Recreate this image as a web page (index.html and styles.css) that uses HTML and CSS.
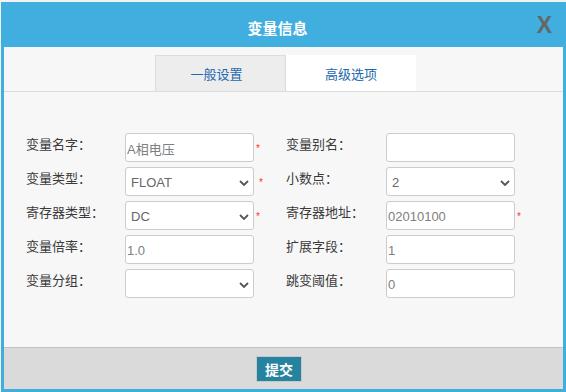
FILE: index.html
```html
<!DOCTYPE html>
<html lang="zh">
<head>
  <meta charset="UTF-8">
  <title>变量信息</title>
  <link rel="stylesheet" href="styles.css">
</head>
<body>
  <div class="dialog">
    <div class="dialog-head">
      <span class="dialog-title">变量信息</span>
      <span class="dialog-close">X</span>
    </div>

    <div class="dialog-body">
      <div class="tabs">
        <div class="tab tab-active">一般设置</div>
        <div class="tab">高级选项</div>
      </div>

      <div class="form">
        <label class="lbl">变量名字：</label>
        <input class="field" value="A相电压">
        <span class="req">*</span>
        <label class="lbl">变量别名：</label>
        <input class="field" value="">
        <span></span>

        <label class="lbl">变量类型：</label>
        <div class="field select"><span>FLOAT</span><svg width="10" height="6" viewBox="0 0 10 6"><path d="M1 1l4 4 4-4" fill="none" stroke="#555" stroke-width="1.8"/></svg></div>
        <span class="req req-sel">*</span>
        <label class="lbl">小数点：</label>
        <div class="field select"><span>2</span><svg width="10" height="6" viewBox="0 0 10 6"><path d="M1 1l4 4 4-4" fill="none" stroke="#555" stroke-width="1.8"/></svg></div>
        <span></span>

        <label class="lbl">寄存器类型：</label>
        <div class="field select"><span>DC</span><svg width="10" height="6" viewBox="0 0 10 6"><path d="M1 1l4 4 4-4" fill="none" stroke="#555" stroke-width="1.8"/></svg></div>
        <span class="req">*</span>
        <label class="lbl">寄存器地址：</label>
        <input class="field" value="02010100">
        <span class="req">*</span>

        <label class="lbl">变量倍率：</label>
        <input class="field" value="1.0">
        <span></span>
        <label class="lbl">扩展字段：</label>
        <input class="field" value="1">
        <span></span>

        <label class="lbl">变量分组：</label>
        <div class="field select"><span></span><svg width="10" height="6" viewBox="0 0 10 6"><path d="M1 1l4 4 4-4" fill="none" stroke="#555" stroke-width="1.8"/></svg></div>
        <span></span>
        <label class="lbl">跳变阈值：</label>
        <input class="field" value="0">
        <span></span>
      </div>
    </div>

    <div class="dialog-foot">
      <button class="btn-submit">提交</button>
    </div>
  </div>
</body>
</html>
```

FILE: styles.css
```css
body {
  margin: 0;
  background: #f2f2f2;
  font-family: "Liberation Sans", "Noto Sans CJK SC", sans-serif;
  overflow: hidden;
}

.dialog {
  margin: 2px 0 0 1px;
  width: 559px;
  height: 384px;
  border: 3px solid #41aee0;
  display: flex;
  flex-direction: column;
  background: #f7f7f7;
}

.dialog-head {
  height: 42px;
  background: #41aee0;
  display: flex;
  align-items: center;
  justify-content: center;
  position: relative;
}

.dialog-title {
  color: #fff;
  font-size: 15px;
  font-weight: bold;
  padding: 3px 12px 0 0;
}

.dialog-close {
  position: absolute;
  right: 11px;
  top: 7px;
  color: #666;
  font-size: 23px;
  font-weight: bold;
  font-family: "Liberation Sans", sans-serif;
}

.dialog-body {
  flex: 1;
  background: #f7f7f7;
}

.tabs {
  display: flex;
  justify-content: center;
  padding: 8px 0 0 4px;
  border-bottom: 1px solid #dcdcdc;
}

.tab {
  width: 130px;
  height: 36px;
  display: flex;
  align-items: center;
  justify-content: center;
  font-size: 13px;
  color: #1b68ad;
  background: #fff;
}

.tab-active {
  width: 129px;
  background: #ededed;
  border: 1px solid #dcdcdc;
  border-bottom: none;
  padding-right: 8px;
  box-sizing: border-box;
  width: 131px;
  height: 36px;
}

.form {
  display: grid;
  grid-template-columns: 99px 129px 32px 100px 129px 1fr;
  row-gap: 5px;
  padding: 41px 0 0 22px;
  align-items: start;
}

.lbl {
  font-size: 13px;
  color: #3a3a3a;
  line-height: 18px;
  padding-top: 3px;
}

.field {
  box-sizing: border-box;
  height: 29px;
  width: 129px;
  margin: 0;
  border: 1px solid #ccc;
  border-radius: 3px;
  background: #fff;
  padding: 2px 0 0 1px;
  font-family: "Liberation Sans", "Noto Sans CJK SC", sans-serif;
  font-size: 13px;
  color: #808080;
  outline: none;
}

.select {
  display: flex;
  align-items: center;
  justify-content: space-between;
  padding: 2px 4px 0 5px;
  color: #666;
}

.select svg {
  margin-top: 1px;
}

.req {
  color: #f33;
  font-size: 10px;
  line-height: 1;
  padding: 11px 0 0 2px;
}

.req-sel {
  padding-left: 5px;
}

.dialog-foot {
  height: 41px;
  border-top: 1px solid #c3c3c3;
  background: #dadada;
  display: flex;
  align-items: center;
  justify-content: center;
  padding-right: 9px;
}

.btn-submit {
  width: 46px;
  height: 26px;
  margin-top: 1px;
  border: 1px solid #c8c8c8;
  background: #26839f;
  color: #fff;
  font-size: 14px;
  font-weight: bold;
  font-family: "Noto Sans CJK SC", sans-serif;
  padding: 0;
}
```
